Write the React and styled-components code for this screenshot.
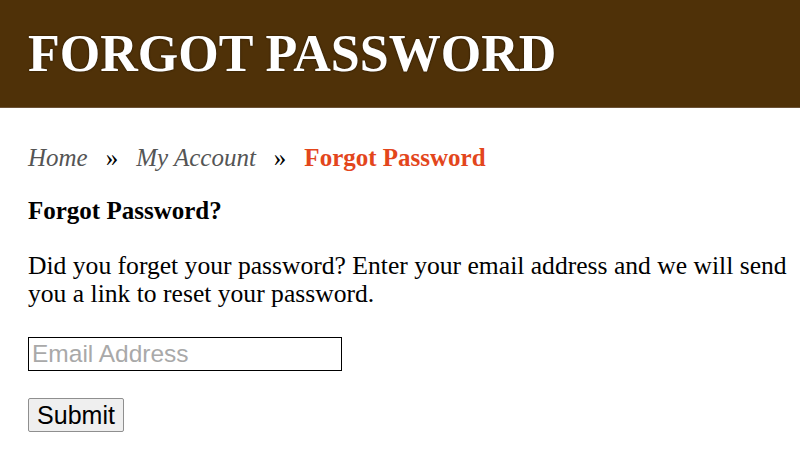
import React from 'react';
import styled, { createGlobalStyle } from 'styled-components';

const GlobalStyle = createGlobalStyle`
  html, body {
    margin: 0;
    padding: 0;
    background: #fff;
  }
  body {
    font-family: "Liberation Serif", "Times New Roman", serif;
    font-size: 25.6px;
    color: #000;
  }
`;

const Banner = styled.header`
  background: #4f3108;
  height: 107px;
  border-bottom: 1px solid #6b5236;
  display: flex;
  align-items: center;
  padding: 0 28px;
`;

const Title = styled.h1`
  margin: 0;
  color: #fff;
  font-size: 52px;
  font-weight: bold;
  text-shadow: 0 0 2px #1c1000;
`;

const Content = styled.main`
  padding: 36px 8px 20px 28px;
`;

const Crumbs = styled.nav`
  display: flex;
  align-items: baseline;
  gap: 18px;
  font-size: 25px;
  line-height: 28px;
`;

const CrumbLink = styled.a`
  font-style: italic;
  color: #555;
  text-decoration: none;
`;

const CrumbSep = styled.span`
  color: #000;
`;

const CrumbCurrent = styled.strong`
  color: #e3461c;
`;

const Heading = styled.h2`
  font-size: 25px;
  line-height: 28px;
  margin: 25px 0 0;
`;

const Text = styled.p`
  margin: 27px 0 0;
  line-height: 28px;
`;

const Form = styled.form`
  display: flex;
  flex-direction: column;
  align-items: flex-start;
  gap: 27px;
  margin-top: 29px;
`;

const EmailInput = styled.input`
  width: 314px;
  height: 34px;
  box-sizing: border-box;
  border: 1px solid #000;
  padding: 0 3px;
  margin: 0;
  font-family: "Liberation Sans", Arial, sans-serif;
  font-size: 24.5px;
  &::placeholder {
    color: #a9a9a9;
  }
`;

const SubmitButton = styled.button`
  height: 34px;
  width: 96px;
  padding: 0;
  margin: 0;
  font-family: "Liberation Sans", Arial, sans-serif;
  font-size: 25px;
  color: #000;
  background: #efefef;
  border: 1px solid #8f8f8f;
  border-radius: 2px;
`;

export default function App() {
  return (
    <>
      <GlobalStyle />
      <Banner>
        <Title>FORGOT PASSWORD</Title>
      </Banner>
      <Content>
        <Crumbs>
          <CrumbLink href="#">Home</CrumbLink>
          <CrumbSep>»</CrumbSep>
          <CrumbLink href="#">My Account</CrumbLink>
          <CrumbSep>»</CrumbSep>
          <CrumbCurrent>Forgot Password</CrumbCurrent>
        </Crumbs>
        <Heading>Forgot Password?</Heading>
        <Text>
          Did you forget your password? Enter your email address and we will send you a link to
          reset your password.
        </Text>
        <Form onSubmit={e => e.preventDefault()}>
          <EmailInput type="email" placeholder="Email Address" />
          <SubmitButton type="submit">Submit</SubmitButton>
        </Form>
      </Content>
    </>
  );
}
